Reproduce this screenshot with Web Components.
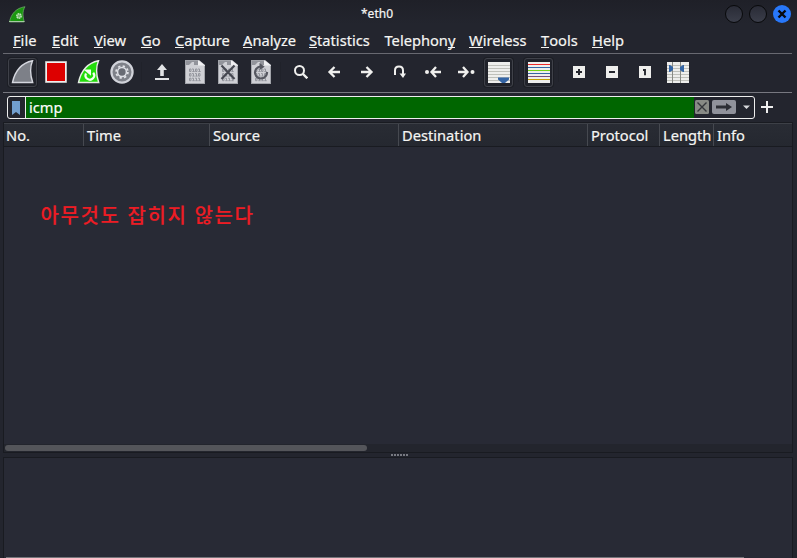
<!DOCTYPE html>
<html lang="en"><head><meta charset="utf-8"><title>*eth0</title>
<style>html,body{margin:0;height:100%;overflow:hidden;background:#23252e}</style></head>
<body>
<capture-window>
<title-bar slot="title">*eth0</title-bar>
<menu-bar slot="menu"></menu-bar>
<tool-bar slot="tools"></tool-bar>
<filter-bar slot="filter">icmp</filter-bar>
<packet-list slot="packets"><red-note>아무것도 잡히지 않는다</red-note></packet-list>
<detail-pane slot="details"></detail-pane>
</capture-window>
<script>
const define=(name,html,setup)=>customElements.define(name,class extends HTMLElement{
 constructor(){super();this.attachShadow({mode:'open'}).innerHTML=html;if(setup)setup(this);}
});
define('capture-window',`<style>:host{display:flex;flex-direction:column;box-sizing:border-box;width:797px;height:558px;overflow:hidden;background:linear-gradient(#1f2028,#23252e 24px);color:#f6f6f4;font:14.67px/20px "Noto Sans",sans-serif;-webkit-text-stroke:.2px #f6f6f4}
</style><slot name="title"></slot><slot name="menu"></slot><slot name="tools"></slot><slot name="filter"></slot><slot name="packets"></slot><slot name="details"></slot>`);
define('title-bar',`<style>:host{display:grid;grid-template-columns:100px 1fr 64px;align-items:center;height:28px;padding:0 5px 0 9px;box-sizing:border-box;font-size:12px}
span{text-align:center;padding-right:83px;line-height:28px}div{display:flex;gap:6px;margin-left:-3px}svg{display:block}</style>
<svg width="17" height="17" viewBox="0 0 17 17"><path d="M.5 16C2 8 7 2 16 .7c-3 5-2 10-.8 15.3z" fill="#1a9710" stroke="#74aa70" stroke-width=".7"/><path d="M0 15.5h15.5" stroke="#a8c9a5"/><circle cx="10" cy="10" r="2.2" fill="#75bd6d" stroke="#c9e6c5" stroke-width="1.4" stroke-dasharray="1.5 .5"/></svg><span><slot></slot></span>
<div><svg width="18" height="18"><defs><linearGradient id="g" x2="0" y2="1"><stop stop-color="#292b36"/><stop offset="1" stop-color="#3b3e4a"/></linearGradient></defs><circle cx="9" cy="9" r="8.5" fill="url(#g)" stroke="#08090b"/></svg><svg width="18" height="18"><circle cx="9" cy="9" r="8.5" fill="url(#g)" stroke="#08090b"/></svg><svg width="18" height="18"><circle cx="9" cy="9" r="9" fill="#2878fa"/><path d="m5.5 5.5 7 7m0-7-7 7" stroke="#08090d" stroke-width="2.4"/></svg></div>`);
define('menu-bar',`<style>:host{display:flex;height:25px;box-sizing:border-box;padding:2px 0 0 13px}span{white-space:nowrap;flex:none}i{font-style:normal;border-bottom:1px solid #f4f4f2;display:inline-block;height:17px}</style>`,el=>{
 const items=[['File',0,39],['Edit',0,42],['View',0,47],['Go',0,34],['Capture',0,68],['Analyze',0,66],['Statistics',0,75.5],['Telephony',8,84.5],['Wireless',0,72],['Tools',0,51],['Help',0,40]];
 for(const [t,k,w] of items){const s=document.createElement('span'),u=document.createElement('i');s.style.width=w+'px';u.textContent=t[k];s.append(t.slice(0,k),u,t.slice(k+1));el.shadowRoot.append(s)}
});
const fin='M1.5 22.5C4 11 11 3 21.5.8c-2.8 6.8-2.4 14 .2 21.7z';
const bits=['0101','0110','0111'].map((row,r)=>[...row].map((b,c)=>{const x=4+c*3,y=8.5+r*4.6;return b==='0'?`<path d="M${x+.5} ${y+.5}h1.5v2.5h-1.500z"/>`:`<path d="M${x} ${y+.5}h1.500v2.500m-1.200 0h2.400"/>`}).join('')).join('');
const page=`<path d="M0 0h14l6 5v19H0z" fill="#cfd0d5"/><path d="M0 0h13v5H0z" fill="#92949b"/><path d="M4 5 7 2h2v3z" fill="#cfd0d5"/><path d="M13 0v5.5h7z" fill="#f0f0f2"/><path d="M0 .5h13.5M.5 0v24M19.5 6v18M0 23.5h20" stroke="#a2a4aa" fill="none"/><g fill="none" stroke="#93959d" stroke-width="1">${bits}</g>`;
const svg=(w,h,b)=>`<svg width="${w}" height="${h}" viewBox="0 0 ${w} ${h}">${b}</svg>`;
const arrowL='<path d="M13 7H3m4.5-5L2.5 7l5 5" fill="none" stroke="#f0f0ee" stroke-width="2.3"/>';
const arrowR='<path d="M1 7h10M6.5 2l5 5-5 5" fill="none" stroke="#f0f0ee" stroke-width="2.3"/>';
const icons={
 fin:svg(23,24,`<path d="${fin}" fill="#7d8088" stroke="#d5d7df" stroke-width="1.4"/>`),
 stop:svg(22,22,'<path d="M.5.5h21v21H.5z" fill="#eee" stroke="#bbb"/><path d="M2 2h18v18H2z" fill="#d00"/>'),
 restart:svg(23,24,`<path d="${fin}" fill="#23dc0b" stroke="#e7eee5" stroke-width="1.4"/><path d="M9 13.5a4.300 4.300 0 1 0 7.200-.8" fill="none" stroke="#f5fff3" stroke-width="2.2"/><path d="M6.500 9.500h7.500v6.200z" fill="#f5fff3"/>`),
 gear:svg(24,24,'<circle cx="12" cy="12" r="10.6" fill="#7e8189" stroke="#d1d3da" stroke-width="2.2"/><circle cx="12" cy="12" r="5.900" fill="none" stroke="#e1e2e7" stroke-width="1.8" stroke-dasharray="2.3 2.33"/><circle cx="12" cy="12" r="4.4" fill="#686b74" stroke="#dddfe5" stroke-width="1.5"/>'),
 open:svg(14,16,'<path d="M7 0 2 6h3.2v6h3.6V6H12zM0 14h14v2H0z" fill="#e2e3e5"/>'),
 file:svg(20,24,page), close:svg(20,24,page+'<path d="M3.5 5.5 16.5 19M16.5 5.5 3.5 19" stroke="#464851" stroke-width="2.2"/>'),
 reload:svg(20,24,page+'<path d="M9.5 6.5A6 6 0 1 0 16 12" fill="none" stroke="#555760" stroke-width="2.2"/><path d="m8.5 3 5.2 3.7-5 3.2z" fill="#555760"/>'),
 search:svg(14,14,'<circle cx="5.5" cy="5.5" r="4.5" fill="none" stroke="#f0f0ee" stroke-width="2"/><path d="m9 9 4.3 4.3" stroke="#f0f0ee" stroke-width="2.4"/>'),
 prev:svg(14,14,arrowL),next:svg(14,14,arrowR),
 jump:svg(14,14,'<path d="M2 10V5.5q0-4 4-4t4 4V10" fill="none" stroke="#f0f0ee" stroke-width="2"/><path d="M6.5 8.5h6.5L10 13z" fill="#f0f0ee"/>'),
 first:svg(18,14,'<circle cx="3" cy="7" r="2" fill="#f0f0ee"/><path d="M17 7H8m4-5L7.5 7l4.5 5" fill="none" stroke="#f0f0ee" stroke-width="2.3"/>'),
 last:svg(18,14,'<circle cx="15.5" cy="7" r="2" fill="#f0f0ee"/><path d="M1 7h9M6 2l4.5 5L6 12" fill="none" stroke="#f0f0ee" stroke-width="2.3"/>'),
 scroll:svg(22,21,'<path d="M0 0h22v21H0z" fill="#eeeeec"/><path d="M0 3.5h22M0 6.5h22M0 9.5h22M0 12.5h22M0 15.5h22M0 18.5h22" stroke="#bfc0ba"/><path d="M10 15.5h11v2L17 21h-3l-4-3.5z" fill="#3565a5"/>'),
 color:svg(22,21,'<path d="M0 0h22v21H0z" fill="#eeeeec"/><g stroke-width="1"><path d="M0 2.5h22" stroke="#ef2929"/><path d="M0 5.5h22" stroke="#3465a4"/><path d="M0 8.5h22" stroke="#73d216"/><path d="M0 11.5h22" stroke="#3465a4"/><path d="M0 14.5h22" stroke="#75507b"/><path d="M0 17.5h22" stroke="#c4a000"/></g>'),
 plus:svg(12,12,'<path d="M0 0h12v12H0z" fill="#eeeeec"/><path d="M6 3v6M3 6h6" stroke="#25272e" stroke-width="2"/>'),
 minus:svg(12,12,'<path d="M0 0h12v12H0z" fill="#eeeeec"/><path d="M3 6h6" stroke="#25272e" stroke-width="2"/>'),
 one:svg(12,12,'<path d="M0 0h12v12H0z" fill="#eeeeec"/><path d="M4 4h2v5.2" fill="none" stroke="#25272e" stroke-width="1.9"/>'),
 cols:svg(22,21,'<path d="M0 0h22v21H0z" fill="#eeeeec"/><path d="M0 3.5h22M0 6.5h22M0 9.5h22M0 12.5h22M0 15.5h22M0 18.5h22" stroke="#bfc0ba"/><path d="M5.5 0v21M13.5 0v21" stroke="#888a85"/><path d="M2 3h1l3 2v3L3 10H2zM17 3h-1l-3 2v3l3 2h1z" fill="#3465a4"/>')
};
define('tool-button',`<style>:host{display:flex;align-items:center;justify-content:center;box-sizing:border-box;width:29px;height:29px;flex:none;border:1px solid transparent;border-radius:3px}:host([active]){border-color:#3f4149;background:#20222a;box-shadow:0 0 0 1px #1c1e25}svg{display:block;flex:none}</style><div></div>`,el=>{el.shadowRoot.querySelector('div').innerHTML=icons[el.getAttribute('icon')]});
define('tool-bar',`<style>:host{display:flex;box-sizing:border-box;height:40px;margin:0 5px 0 3px;border-top:1px solid #686971;border-bottom:1px solid #777880;align-items:center;padding:0 0 2px 5px;gap:4px}hr{border:0;width:1px;margin:0 1px;height:20px;background:#20222a;flex:none}</style>`,el=>{
 el.shadowRoot.innerHTML+='fin stop restart gear | open file close reload | search prev next jump first last scroll | color | plus minus one cols'.split(' ').map(n=>n==='|'?'<hr>':`<tool-button icon="${n}"${/^(fin|scroll|color)$/.test(n)?' active':''}></tool-button>`).join('');
});
define('filter-bar',`<style>:host{display:flex;height:29px;box-sizing:border-box;padding:3px 0 3px 7px;align-items:center;gap:6px}.box{display:flex;box-sizing:border-box;width:748px;height:23px;border:1px solid #eee;border-radius:3px;overflow:hidden}.mark{border-right:1px solid #eee;display:grid;place-items:center;padding-right:1px;box-sizing:border-box;width:18px}.text{padding-left:3px;background:#060;line-height:20px;color:#fff;height:21px;width:665px}.ctl{display:flex;align-items:center;gap:3px;padding:0 0 2px 1px}svg{display:block}</style>
<div class="box"><div class="mark"><svg width="8" height="14"><path d="M0 0h8v14l-4-3-4 3z" fill="#729fcf"/></svg></div><div class="text"><slot></slot></div><div class="ctl"><svg width="14" height="14"><rect width="14" height="14" rx="1.5" fill="#888a85"/><path d="m2.5 2.5 9 9m0-9-9 9" stroke="#34363b" stroke-width="1.4"/></svg><svg width="24" height="14"><rect width="24" height="14" rx="2" fill="#90929b"/><path d="M4 5.5h10V3l6 4-6 4V8.5H4z" fill="#2c2e35"/></svg><svg width="14" height="14"><path d="M4 5.5h7L7.5 9z" fill="#d8d9dc"/></svg></div></div><svg width="13" height="13"><path d="M6 0v12M0 6h12" stroke="#eee" stroke-width="2"/></svg>`);
define('packet-list',`<style>:host{display:flex;flex-direction:column;position:relative;box-sizing:border-box;width:790px;height:331px;margin-left:3px;border:1px solid #191b21;background:#282a35}.head{display:flex;box-sizing:border-box;height:24px;border-top:1px solid #3d4047;border-bottom:1px solid #191b21;background:linear-gradient(#292c34,#252830);line-height:22px;flex:none}.head span{box-sizing:border-box;border-right:1px solid #464950;padding-left:3px;white-space:nowrap;flex:none}.head span:first-child{padding-left:2px}.head span:last-child{border:0;flex:1}.body{flex:1}.scroll{height:8px;background:#23252d;padding:0 0 0 1px;display:flex;align-items:center}.thumb{width:362px;height:6px;border-radius:3px;background:#54555a}</style><div class="head"></div><div class="body"><slot></slot></div><div class="scroll"><div class="thumb"></div></div>`,el=>{
 el.shadowRoot.querySelector('.head').innerHTML=[['No.',80],['Time',126],['Source',189],['Destination',189],['Protocol',72],['Length',54],['Info',78]].map(([t,w])=>`<span style="width:${w}px">${t}</span>`).join('')});
define('red-note',`<style>:host{display:block;position:absolute;left:36.5px;top:78px;white-space:nowrap;color:#ed1c24;font:500 20px/28px "Noto Sans CJK KR",sans-serif;letter-spacing:1.6px;word-spacing:.9px;-webkit-text-stroke:.1px #ed1c24}</style><slot></slot>`);
define('detail-pane',`<style>:host{display:flex;flex-direction:column;flex:1;margin:0 4px 0 3px}.grip{height:4px;display:flex;justify-content:center;gap:1px;align-items:center;padding-left:3px}.grip i{width:2px;height:2px;background:#777981}.pane{flex:1;border:1px solid #191b21;border-bottom:0;background:#282a35;display:flex;align-items:flex-end}.line{height:1px;width:738px;margin-left:2px;background:#75767b}</style><div class="grip"><i></i><i></i><i></i><i></i><i></i><i></i></div><div class="pane"><div class="line"></div></div>`);
</script></body></html>
